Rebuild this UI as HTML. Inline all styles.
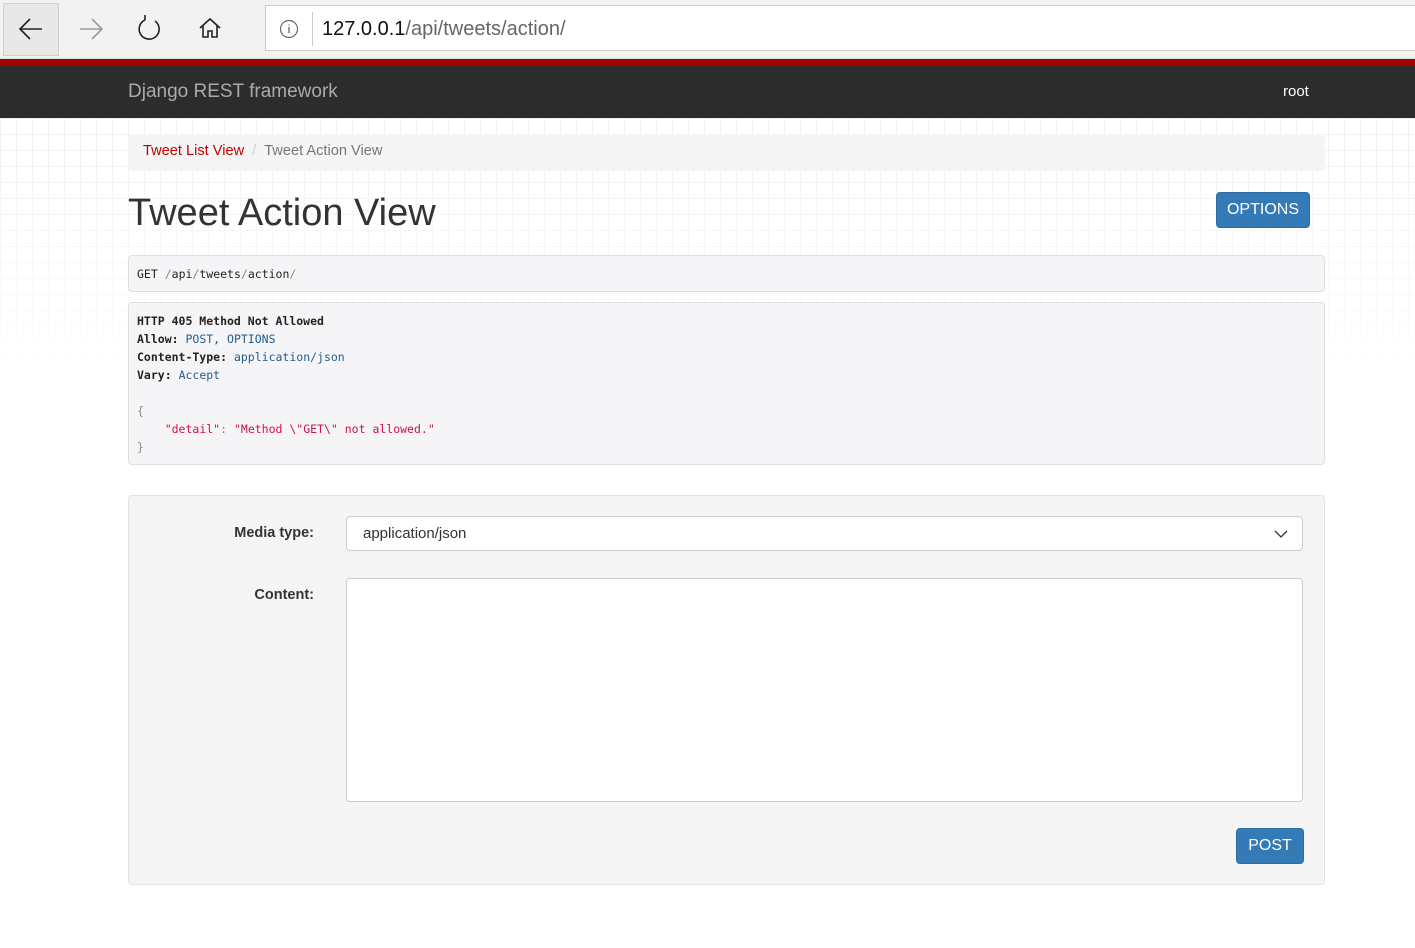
<!DOCTYPE html>
<html><head><style>
*{box-sizing:border-box;margin:0;padding:0}
body{width:1415px;height:948px;overflow:hidden;background:#fff;font-family:"Liberation Sans",Arial,sans-serif;position:relative;color:#333}
.chrome{position:absolute;left:0;top:0;width:1415px;height:59px;background:#f2f2f2;border-bottom:1px solid #ddd}
.addr{position:absolute;left:265px;top:5px;width:1160px;height:46px;background:#fff;border:1px solid #ccc}
.url{position:absolute;left:56px;top:12px;font-size:20px;color:#666}
.url b{font-weight:normal;color:#111}
.red{position:absolute;left:0;top:59px;width:1415px;height:6px;background:#a30000}
.nav{position:absolute;left:0;top:65px;width:1415px;height:53px;background:#2c2c2c}
.grid{position:absolute;left:0;top:118px;width:1415px;height:280px;background-image:linear-gradient(#f0f0f0 1px,transparent 1px),linear-gradient(90deg,#f0f0f0 1px,transparent 1px);background-size:16px 16px;-webkit-mask-image:linear-gradient(180deg,#000,transparent);}
.bc{position:absolute;left:128px;top:134px;width:1197px;height:37px;background:#f5f5f5;border-radius:4px;font-size:14.6px;padding:9px 15px}
h1{position:absolute;left:128px;top:192px;font-size:38px;font-weight:normal;color:#333}
.btn{position:absolute;background:#337ab7;border:1px solid #2e6da4;border-radius:4px;color:#fff;font-size:16px;text-align:center}
pre{font-family:"DejaVu Sans Mono","Liberation Mono",monospace;font-size:11.5px;line-height:18px;background:#f5f5f8;border:1px solid #ddd;border-radius:4px;position:absolute;left:128px;width:1197px;padding:0 8px;color:#222}
.k{color:#1f5d8f}.s{color:#d0104a}.g{color:#888}
.form{position:absolute;left:128px;top:495px;width:1197px;height:390px;background:#f5f5f5;border:1px solid #e3e3e3;border-radius:4px}
.lbl{position:absolute;font-weight:bold;font-size:14.5px;color:#333;right:1010px}
.inp{position:absolute;left:217px;width:957px;background:#fff;border:1px solid #ccc;border-radius:4px}
</style></head><body>
<div class="chrome">
<div style="position:absolute;left:3px;top:3px;width:56px;height:53px;background:#e8e8e8;border:1px solid #d0d0d0"></div>
<svg style="position:absolute;left:0;top:0" width="240" height="58"><g fill="none" stroke-width="1.6">
<path d="M42 29H20M30 19L20 29L30 39" stroke="#222"/>
<path d="M80 29H102M92 19L102 29L92 39" stroke="#999"/>
<path d="M145 20A10 10 0 1 0 155 21M145 20L145 15" stroke="#222"/>
<path d="M200 28L210 19L220 28M203 26V37H208V31H212V37H217V26" stroke="#222"/></g></svg>
<div class="addr"><svg style="position:absolute;left:13px;top:13px" width="20" height="20"><circle cx="10" cy="10" r="8.5" fill="none" stroke="#666" stroke-width="1.2"/><path d="M10 8V14M10 5.5V6.5" stroke="#666" stroke-width="1.3"/></svg>
<div style="position:absolute;left:46px;top:6px;width:1px;height:34px;background:#ccc"></div>
<div class="url"><b>127.0.0.1</b>/api/tweets/action/</div></div>
</div>
<div class="red"></div>
<div class="nav"><span style="position:absolute;left:128px;top:16px;font-size:19px;color:#aaa">Django REST framework</span><span style="position:absolute;left:1283px;top:18px;font-size:15px;color:#fff">root</span></div>
<div class="grid"></div>
<div class="bc"><span style="color:#c20000">Tweet List View</span><span style="color:#ccc;padding:0 8px">/</span><span style="color:#777">Tweet Action View</span></div>
<h1>Tweet Action View</h1>
<div class="btn" style="left:1216px;top:192px;width:94px;height:36px;line-height:34px">OPTIONS</div>
<pre style="top:255px;height:37px;padding-top:9px">GET <span class="g">/</span>api<span class="g">/</span>tweets<span class="g">/</span>action<span class="g">/</span></pre>
<pre style="top:302px;height:163px;padding-top:9px"><b>HTTP 405 Method Not Allowed</b>
<b>Allow:</b> <span class="k">POST, OPTIONS</span>
<b>Content-Type:</b> <span class="k">application/json</span>
<b>Vary:</b> <span class="k">Accept</span>

<span class="g">{</span>
    <span class="s">"detail"</span><span class="g">:</span> <span class="s">"Method \"GET\" not allowed."</span>
<span class="g">}</span></pre>
<div class="form">
<div class="lbl" style="top:29px">Media type:</div>
<div class="inp" style="top:20px;height:35px;font-size:15px;padding:8px 16px">application/json<svg style="position:absolute;right:14px;top:12px" width="14" height="10"><path d="M1 2L7 8L13 2" fill="none" stroke="#333" stroke-width="1.3"/></svg></div>
<div class="lbl" style="top:91px">Content:</div>
<div class="inp" style="top:82px;height:224px"></div>
<div class="btn" style="left:1107px;top:332px;width:68px;height:36px;line-height:34px">POST</div>
</div>
</body></html>
